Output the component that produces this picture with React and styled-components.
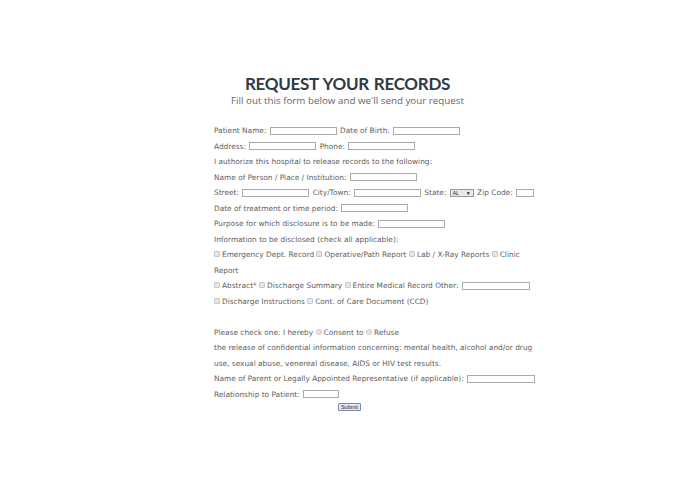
import React from 'react';
import styled, { createGlobalStyle } from 'styled-components';

const Global = createGlobalStyle`
  html, body { margin: 0; background: #fff; }
  body { font-family: "DejaVu Sans", "Open Sans", sans-serif; }
`;

const Page = styled.div`
  width: 695px;
  padding-top: 74px;
  display: flex;
  flex-direction: column;
  align-items: center;
`;

const Title = styled.h1`
  margin: 0;
  font-family: "Lato", "Open Sans", sans-serif;
  font-size: 17px;
  line-height: 20px;
  font-weight: 700;
  letter-spacing: -0.3px;
  word-spacing: 1px;
  color: #2d3b47;
`;

const Subtitle = styled.p`
  margin: 0;
  font-family: "Open Sans", sans-serif;
  font-size: 9.8px;
  line-height: 14px;
  color: #666;
`;

const Form = styled.form`
  width: 326px;
  margin: 15px 0 0 59px;
  font-size: 7.4px;
  line-height: 15.5px;
  color: #5e5e5e;
`;

const Row = styled.div`
  min-height: 15.5px;
`;

const Field = styled.input`
  width: ${p => p.$w || 64}px;
  height: 6px;
  padding: 0;
  margin: 0 1px;
  border: 1px solid #aaa;
  vertical-align: middle;
  background: #fff;
`;

const Box = styled.span`
  display: inline-block;
  width: 4px;
  height: 4px;
  margin: 0 2px 1px 0;
  border: 1px solid #c8c8c8;
  border-radius: ${p => (p.$round ? '50%' : '1px')};
  background: #e6e6e6;
  vertical-align: middle;
`;

const Select = styled.span`
  display: inline-flex;
  align-items: center;
  justify-content: space-between;
  width: 18px;
  height: 6px;
  padding: 0 2px;
  margin: 0 1px;
  border: 1px solid #999;
  background: #e8e8e8;
  font-family: "Liberation Sans", sans-serif;
  font-size: 5px;
  line-height: 6px;
  color: #222;
  vertical-align: middle;
`;

const SubmitRow = styled.div`
  display: flex;
  justify-content: center;
  width: 695px;
  margin-top: 1px;
`;

const Submit = styled.button`
  font-family: "Liberation Sans", sans-serif;
  font-size: 5.5px;
  line-height: 6px;
  padding: 0 2px;
  height: 8px;
  border: 1px solid #7a8aa8;
  border-radius: 1px;
  background: #e4e8f0;
  color: #223;
  margin-left: 4px;
`;

export default function App() {
  return (
    <>
      <Global />
      <Page>
        <Title>REQUEST YOUR RECORDS</Title>
        <Subtitle>Fill out this form below and we'll send your request</Subtitle>
        <Form>
          <Row>Patient Name: <Field $w={65} /> Date of Birth: <Field $w={65} /></Row>
          <Row>Address: <Field $w={65} /> Phone: <Field $w={65} /></Row>
          <Row>I authorize this hospital to release records to the following:</Row>
          <Row>Name of Person / Place / Institution: <Field $w={65} /></Row>
          <Row>
            Street: <Field $w={65} /> City/Town: <Field $w={65} /> State:{' '}
            <Select>AL <span>▼</span></Select> Zip Code: <Field $w={16} />
          </Row>
          <Row>Date of treatment or time period: <Field $w={65} /></Row>
          <Row>Purpose for which disclosure is to be made: <Field $w={65} /></Row>
          <Row>Information to be disclosed (check all applicable):</Row>
          <Row>
            <Box />Emergency Dept. Record <Box />Operative/Path Report <Box />Lab / X-Ray Reports{' '}
            <Box />Clinic Report
          </Row>
          <Row>
            <Box />Abstract* <Box />Discharge Summary <Box />Entire Medical Record Other: <Field $w={66} />
          </Row>
          <Row><Box />Discharge Instructions <Box />Cont. of Care Document (CCD)</Row>
          <Row />
          <Row>Please check one: I hereby <Box $round />Consent to <Box $round />Refuse</Row>
          <Row>
            the release of confidential information concerning: mental health, alcohol and/or drug use,
            sexual abuse, venereal disease, AIDS or HIV test results.
          </Row>
          <Row>Name of Parent or Legally Appointed Representative (if applicable): <Field $w={66} /></Row>
          <Row>Relationship to Patient: <Field $w={34} /></Row>
        </Form>
        <SubmitRow><Submit type="button">Submit</Submit></SubmitRow>
      </Page>
    </>
  );
}
